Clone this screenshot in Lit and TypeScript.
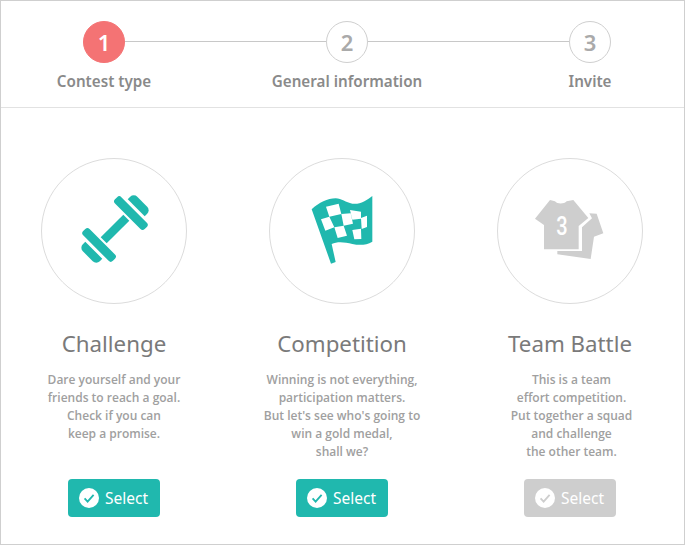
import { LitElement, html, css, svg } from "lit";
import { customElement } from "lit/decorators.js";

const dumbbell = svg`<svg class="art" viewBox="0 0 146 146" width="146" height="146">
  <g transform="translate(74 71) rotate(-45)" fill="#20b8ae">
    <rect x="-16" y="-4.25" width="32" height="8.5"/>
    <rect x="-27" y="-21" width="9" height="42" rx="3"/>
    <rect x="18" y="-21" width="9" height="42" rx="3"/>
    <path d="M-30 -12 V12 H-33.5 a5 5 0 0 1 -5 -5 V-7 a5 5 0 0 1 5 -5 Z"/>
    <path d="M30 -12 V12 H33.5 a5 5 0 0 0 5 -5 V-7 a5 5 0 0 0 -5 -5 Z"/>
  </g>
</svg>`;

const flag = svg`<svg class="art" viewBox="0 0 146 146" width="146" height="146">
  <g transform="translate(26 22) scale(.3333)">
    <path fill="#20b8ae" d="M50 88 C72 68 98 55 122 55 C140 55 152 68 172 71 C195 74 214 62 232 48 V185 C214 195 196 197 172 192 C150 187 128 184 110 192 L122 246 L108 251 Z"/>
    <path fill="#fff" d="M93 80 L131 71 L139 102 L103 110 Z M78 118 L103 110 L118 142 L91 152 Z M139 102 L167 100 L174 131 L146 137 Z M118 142 L146 137 L156 167 L128 174 Z M165 90 L198 95 L198 116 L172 119 Z M172 150 L198 146 L199 177 L178 178 Z M198 114 L216 107 L216 141 L200 147 Z"/>
  </g>
</svg>`;

const shirt = svg`<svg class="art" viewBox="0 0 146 146" width="146" height="146">
  <g transform="translate(23 27) scale(.3333)" fill="#cecece">
    <path d="M90 45 L105 49 C112 58 132 58 140 49 L160 45 L205 99 L176 123 V193 H72 V120 L45 101 Z"/>
    <path d="M208 85 L230 86 L250 145 L222 155 L212 222 L112 208 V198 L186 198 V127 L216 100 Z"/>
  </g>
  <text class="num" text-anchor="middle" transform="translate(65 77) scale(.8 1)">3</text>
</svg>`;

const check = (color: string) => svg`<svg class="tick" viewBox="0 0 20 20" width="20" height="20">
  <circle cx="10" cy="10" r="10" fill="#fff"/>
  <path d="M5.6 10.4 L8.6 13.6 L14.6 6.8" fill="none" stroke="${color}" stroke-width="1.8"/>
</svg>`;

interface Card { art: unknown; title: string; lines: string[]; off?: boolean }

const cards: Card[] = [
  { art: dumbbell, title: "Challenge", lines: ["Dare yourself and your", "friends to reach a goal.", "Check if you can", "keep a promise."] },
  { art: flag, title: "Competition", lines: ["Winning is not everything,", "participation matters.", "But let's see who's going to", "win a gold medal,", "shall we?"] },
  { art: shirt, title: "Team Battle", lines: ["This is a team", "effort competition.", "Put together a squad", "and challenge", "the other team."], off: true },
];

@customElement("app-root")
export class AppRoot extends LitElement {
  static styles = css`
    :host { display: block; width: 685px; height: 545px; box-sizing: border-box; border: 1px solid #cfcfcf; background: #fff; font-family: "Open Sans", sans-serif; overflow: hidden; }
    .head { padding-top: 20px; box-sizing: border-box; height: 107px; border-bottom: 1px solid #e2e2e2; }
    .track { display: flex; align-items: center; padding: 0 73px 0 82px; }
    .dot { width: 42px; height: 42px; box-sizing: border-box; border-radius: 50%; border: 1px solid #cfcfcf; display: flex; align-items: center; justify-content: center; font: 600 22px "Noto Sans", sans-serif; color: #aaa; flex: none; }
    .dot.on { background: #f47374; border-color: #f47374; color: #fff; }
    .line { flex: 1; height: 1px; margin-bottom: 1px; background: #c8c8c8; }
    .labels { display: flex; justify-content: space-between; padding: 7px 14px 0 23px; }
    .labels span { width: 160px; text-align: center; font: 600 15.2px/22px "Noto Sans", sans-serif; color: #8a8a8a; white-space: nowrap; }
    .cards { display: grid; grid-template-columns: repeat(3, 226px); column-gap: 2px; padding-top: 50px; }
    .card { display: flex; flex-direction: column; align-items: center; }
    .ring { width: 146px; height: 146px; box-sizing: border-box; border: 1px solid #dcdcdc; border-radius: 50%; position: relative; }
    .art { position: absolute; left: -1px; top: -1px; }
    .num { font: 500 25px "Roboto", sans-serif; fill: #fff; }
    h2 { margin: 23px 0 0; font: 400 22.3px/33px "Noto Sans", sans-serif; color: #7a7a7a; }
    .desc { margin: 11px 0 0; height: 99px; text-align: center; font-size: 12px; font-weight: 600; line-height: 18px; color: #a0a0a0; white-space: nowrap; }
    .off-text { padding-left: 3px; }
    button { all: unset; margin-top: 9px; width: 92px; height: 38px; box-sizing: border-box; border-radius: 4px; background: #20b8ae; color: #fff; display: flex; align-items: center; gap: 6px; padding-left: 11px; font: 400 15.5px "Noto Sans", sans-serif; }
    button.off { background: #cecece; }
    .tick { flex: none; }
  `;

  render() {
    return html`
      <div class="head">
        <div class="track">
          <div class="dot on">1</div><div class="line"></div>
          <div class="dot">2</div><div class="line"></div>
          <div class="dot">3</div>
        </div>
        <div class="labels"><span>Contest type</span><span>General information</span><span>Invite</span></div>
      </div>
      <div class="cards">
        ${cards.map(c => html`
          <section class="card">
            <div class="ring">${c.art}</div>
            <h2>${c.title}</h2>
            <p class="desc ${c.off ? "off-text" : ""}">${c.lines.map(l => html`${l}<br>`)}</p>
            <button class=${c.off ? "off" : ""}>${check(c.off ? "#cecece" : "#20b8ae")}Select</button>
          </section>`)}
      </div>`;
  }
}
